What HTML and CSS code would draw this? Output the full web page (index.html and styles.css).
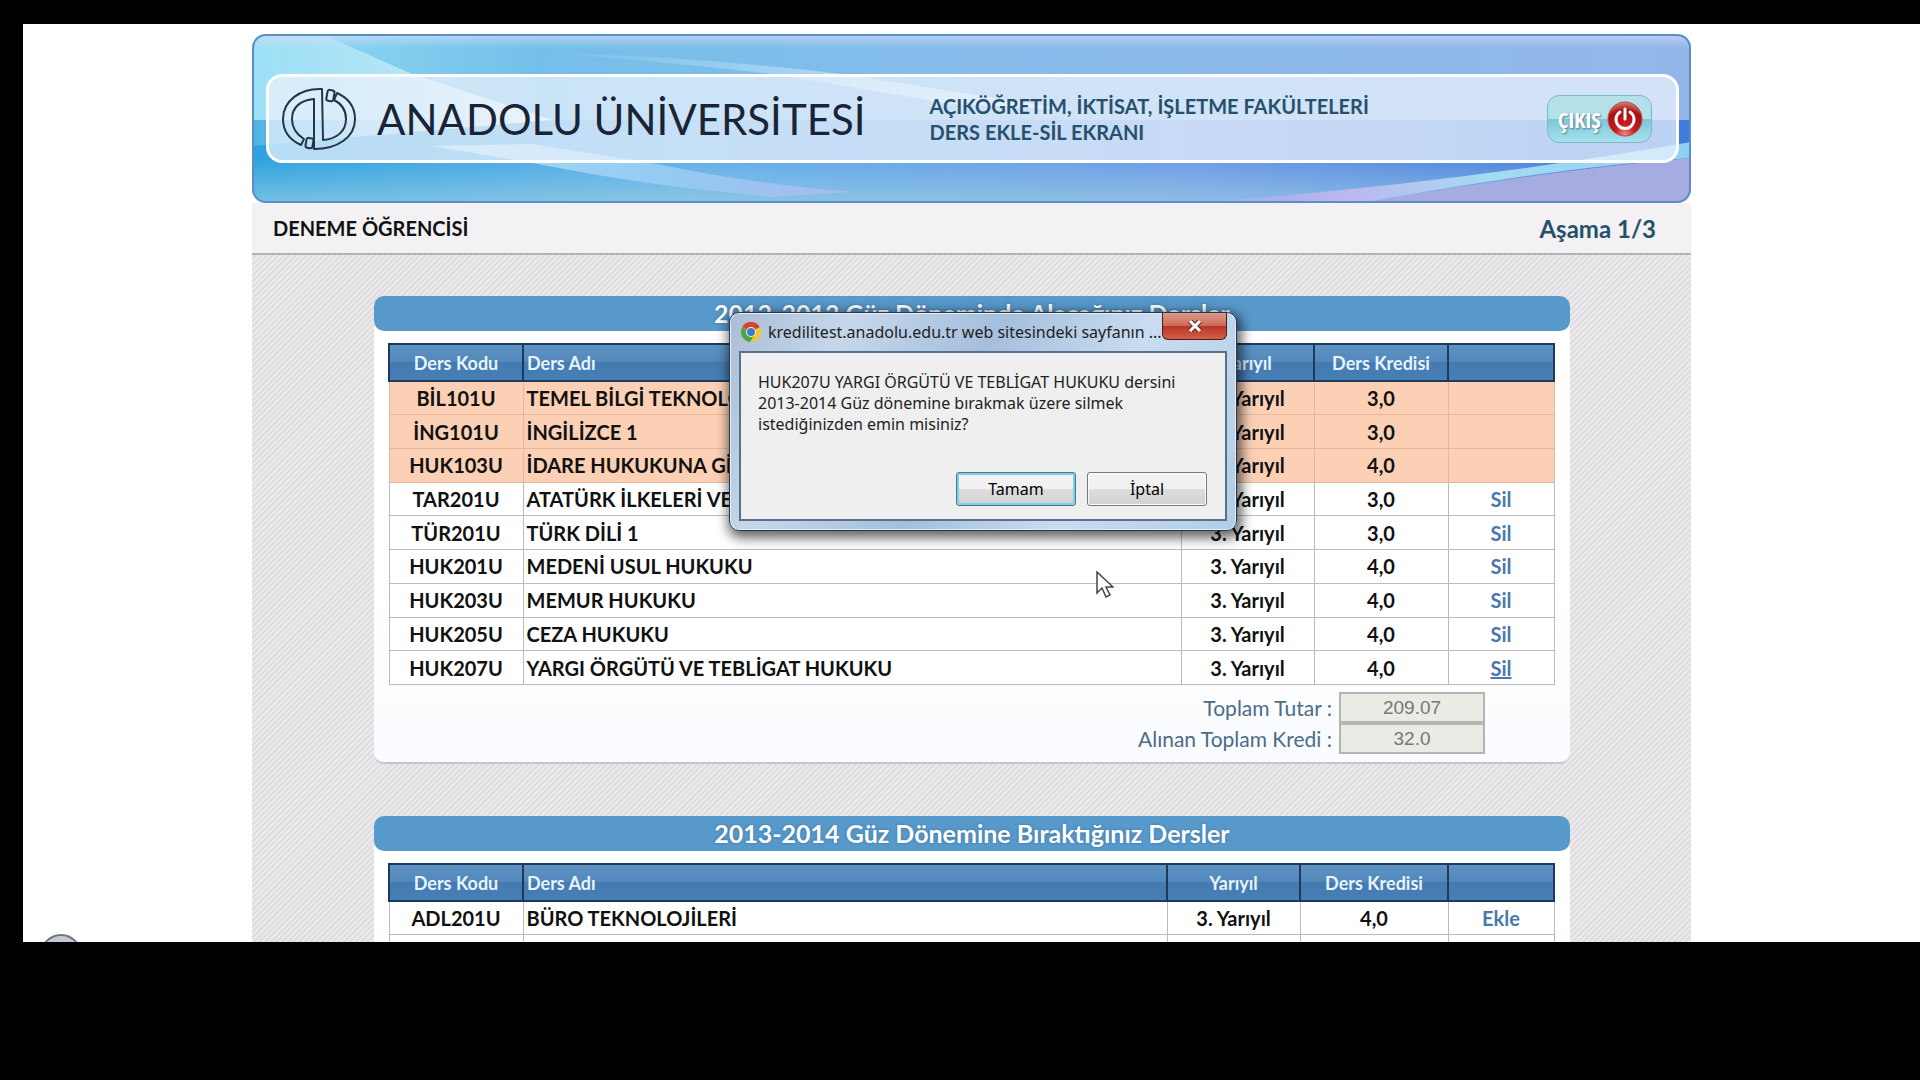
FILE: index.html
```html
<!DOCTYPE html>
<html lang="tr">
<head>
  <meta charset="UTF-8">
  <meta name="viewport" content="width=device-width, initial-scale=1.0">
  <title>Anadolu Üniversitesi - Ders Ekle-Sil Ekranı</title>
  <link rel="stylesheet" href="styles.css">
</head>
<body>
  <div class="screen">
    <div class="page">
      <header class="banner">
        <svg class="banner-bg" viewBox="0 0 1439 169" preserveAspectRatio="none" aria-hidden="true">
          <defs>
            <linearGradient id="top" x1="0" x2="1" y1="0" y2="0">
              <stop offset="0" stop-color="#8fdcf4"/>
              <stop offset=".2" stop-color="#74bfe9"/>
              <stop offset=".5" stop-color="#86bbea"/>
              <stop offset="1" stop-color="#93b6e8"/>
            </linearGradient>
            <linearGradient id="low" x1="0" x2="1" y1="0" y2="0">
              <stop offset="0" stop-color="#2da3df"/>
              <stop offset=".3" stop-color="#62b0e8"/>
              <stop offset=".65" stop-color="#6f9ce6"/>
              <stop offset="1" stop-color="#3f7bdc"/>
            </linearGradient>
            <linearGradient id="gloss" x1="0" x2="0" y1="0" y2="1">
              <stop offset="0" stop-color="#d4dcf8" stop-opacity=".7"/>
              <stop offset="1" stop-color="#d4dcf8" stop-opacity="0"/>
            </linearGradient>
            <linearGradient id="foot" x1="0" x2="0" y1="0" y2="1">
              <stop offset="0" stop-color="#a6d4e4" stop-opacity="0"/>
              <stop offset="1" stop-color="#a6d4e4" stop-opacity=".6"/>
            </linearGradient>
            <linearGradient id="ray" x1="0" x2="1" y1="0" y2="0">
              <stop offset="0" stop-color="#d2f3fb" stop-opacity=".2"/>
              <stop offset="1" stop-color="#e4f7fd"/>
            </linearGradient>
            <linearGradient id="beam" x1="0" x2="1" y1="0" y2="0">
              <stop offset="0" stop-color="#b9a9ee" stop-opacity=".2"/>
              <stop offset=".3" stop-color="#bcb6f0"/>
              <stop offset=".6" stop-color="#a4dcf0"/>
              <stop offset="1" stop-color="#8fd0f2"/>
            </linearGradient>
            <linearGradient id="swoosh" x1="0" x2="1" y1="0" y2="0">
              <stop offset="0" stop-color="#c5e8fa" stop-opacity="0"/>
              <stop offset="1" stop-color="#d5effc"/>
            </linearGradient>
            <linearGradient id="tail" x1="0" x2="1" y1="0" y2="0">
              <stop offset="0" stop-color="#a5dcf4"/>
              <stop offset=".6" stop-color="#93c9f2"/>
              <stop offset="1" stop-color="#a9b9f2"/>
            </linearGradient>
          </defs>
          <rect width="1439" height="169" fill="url(#low)"/>
          <rect width="1439" height="86" fill="url(#top)"/>
          <rect y="125" width="1439" height="44" fill="url(#foot)"/>
          <path d="M0 0H70L160 40 300 86 0 112Z" fill="url(#ray)"/>
          <path d="M280 18Q440 22 590 40L820 76 700 70 520 40Q400 26 280 18Z" fill="url(#swoosh)"/>
          <path d="M180 112 280 129Q400 153 520 163L600 158Q500 150 400 129L280 110Z" fill="url(#tail)"/>
          <path d="M940 169Q1200 150 1439 108V124Q1300 134 1110 169Z" fill="url(#beam)"/>
          <path d="M1110 169Q1290 137 1439 124V169Z" fill="#a6abe2"/>
          <rect width="1439" height="14" fill="url(#gloss)"/>
        </svg>
        <div class="banner-inner">
          <svg class="logo" viewBox="0 0 76 64" aria-hidden="true">
            <g fill="none" stroke="#243548" stroke-width="2" stroke-linejoin="round">
              <path d="M41 2C19 1 2 14 2 32C2 44 9 53 20 58L23 52C15 47 11 40 11 32C11 20 20 13 33 12V62C57 62 74 50 74 32C74 20 67 11 56 6L53 13C61 17 65 24 65 32C65 44 56 52 42 53Z"/>
              <rect x="46" y="3" width="7" height="11" rx="2" transform="rotate(10 49 8)"/>
              <rect x="25" y="51" width="7" height="10" rx="2" transform="rotate(10 28 56)"/>
            </g>
          </svg>
          <div class="brand">ANADOLU ÜNİVERSİTESİ</div>
          <h1 class="subtitle">AÇIKÖĞRETİM, İKTİSAT, İŞLETME FAKÜLTELERİ<br>DERS EKLE-SİL EKRANI</h1>
          <button class="exit" type="button">
            <span>ÇIKIŞ</span>
            <svg viewBox="0 0 36 36" width="36" height="36" aria-hidden="true">
              <defs>
                <radialGradient id="power" cx=".5" cy=".95" r="1">
                  <stop offset="0" stop-color="#f08a80"/>
                  <stop offset=".3" stop-color="#c81c1c"/>
                  <stop offset=".7" stop-color="#a80f12"/>
                  <stop offset="1" stop-color="#e89a92"/>
                </radialGradient>
              </defs>
              <circle cx="18" cy="18" r="17" fill="url(#power)" stroke="#b84a4c"/>
              <path d="M13 11A9 9 0 1 0 23 11M18 8V18" fill="none" stroke="#fff" stroke-width="3" stroke-linecap="round"/>
            </svg>
          </button>
        </div>
      </header>

      <div class="infobar">
        <span class="student">DENEME ÖĞRENCİSİ</span>
        <span class="step">Aşama 1/3</span>
      </div>

      <main class="content">
        <section class="panel">
          <h2>2012-2013 Güz Döneminde Alacağınız Dersler</h2>
          <table class="courses taken">
            <colgroup><col class="c-code"><col><col class="c-term"><col class="c-credit"><col class="c-action"></colgroup>
            <thead>
              <tr><th>Ders Kodu</th><th class="name">Ders Adı</th><th>Yarıyıl</th><th>Ders Kredisi</th><th></th></tr>
            </thead>
            <tbody>
              <tr class="locked"><td>BİL101U</td><td class="name">TEMEL BİLGİ TEKNOLOJİLERİ 1</td><td>1. Yarıyıl</td><td>3,0</td><td></td></tr>
              <tr class="locked"><td>İNG101U</td><td class="name">İNGİLİZCE 1</td><td>1. Yarıyıl</td><td>3,0</td><td></td></tr>
              <tr class="locked"><td>HUK103U</td><td class="name">İDARE HUKUKUNA GİRİŞ</td><td>1. Yarıyıl</td><td>4,0</td><td></td></tr>
              <tr><td>TAR201U</td><td class="name">ATATÜRK İLKELERİ VE İNKILAP TARİHİ 1</td><td>3. Yarıyıl</td><td>3,0</td><td><a href="#">Sil</a></td></tr>
              <tr><td>TÜR201U</td><td class="name">TÜRK DİLİ 1</td><td>3. Yarıyıl</td><td>3,0</td><td><a href="#">Sil</a></td></tr>
              <tr><td>HUK201U</td><td class="name">MEDENİ USUL HUKUKU</td><td>3. Yarıyıl</td><td>4,0</td><td><a href="#">Sil</a></td></tr>
              <tr><td>HUK203U</td><td class="name">MEMUR HUKUKU</td><td>3. Yarıyıl</td><td>4,0</td><td><a href="#">Sil</a></td></tr>
              <tr><td>HUK205U</td><td class="name">CEZA HUKUKU</td><td>3. Yarıyıl</td><td>4,0</td><td><a href="#">Sil</a></td></tr>
              <tr><td>HUK207U</td><td class="name">YARGI ÖRGÜTÜ VE TEBLİGAT HUKUKU</td><td>3. Yarıyıl</td><td>4,0</td><td><a class="active" href="#">Sil</a></td></tr>
            </tbody>
          </table>
          <div class="totals">
            <label for="amount">Toplam Tutar :</label>
            <input id="amount" type="text" value="209.07" readonly>
            <label for="credits">Alınan Toplam Kredi :</label>
            <input id="credits" type="text" value="32.0" readonly>
          </div>
        </section>

        <section class="panel">
          <h2>2013-2014 Güz Dönemine Bıraktığınız Dersler</h2>
          <table class="courses dropped">
            <colgroup><col class="c-code"><col><col class="c-term"><col class="c-credit"><col class="c-action"></colgroup>
            <thead>
              <tr><th>Ders Kodu</th><th class="name">Ders Adı</th><th>Yarıyıl</th><th>Ders Kredisi</th><th></th></tr>
            </thead>
            <tbody>
              <tr><td>ADL201U</td><td class="name">BÜRO TEKNOLOJİLERİ</td><td>3. Yarıyıl</td><td>4,0</td><td><a href="#">Ekle</a></td></tr>
              <tr><td></td><td></td><td></td><td></td><td></td></tr>
            </tbody>
          </table>
        </section>
      </main>

      <div class="dialog" role="dialog" aria-labelledby="dialogTitle">
        <div class="dialog-bar">
          <svg viewBox="0 0 20 20" width="20" height="20" aria-hidden="true">
            <circle cx="10" cy="10" r="10" fill="#f2c928"/>
            <path d="M10 10 1.3 5A10 10 0 0 1 18.7 5Z" fill="#d8402f"/>
            <path d="M10 10 1.3 5A10 10 0 0 0 9 20L14 12Z" fill="#4da64a"/>
            <circle cx="10" cy="10" r="5" fill="#f3f6fa"/>
            <circle cx="10" cy="10" r="4" fill="#3d7cc4"/>
          </svg>
          <span id="dialogTitle">kredilitest.anadolu.edu.tr web sitesindeki sayfanın ...</span>
          <button class="close" type="button" aria-label="Kapat">
            <svg viewBox="0 0 14 12" width="14" height="12"><path d="M2 1 12 11M12 1 2 11" stroke="#5d2a2a" stroke-width="5"/><path d="M2 1 12 11M12 1 2 11" stroke="#fff" stroke-width="3"/></svg>
          </button>
        </div>
        <div class="dialog-body">
          <p>HUK207U YARGI ÖRGÜTÜ VE TEBLİGAT HUKUKU dersini<br>2013-2014 Güz dönemine bırakmak üzere silmek<br>istediğinizden emin misiniz?</p>
          <div class="dialog-buttons">
            <button class="default" type="button">Tamam</button>
            <button type="button">İptal</button>
          </div>
        </div>
      </div>

      <svg class="cursor" viewBox="0 0 18 28" width="18" height="28" aria-hidden="true">
        <path d="M1 1V22L6 17 10 26 14 24 10 16H17Z" fill="#fff" stroke="#444" stroke-width="1.5"/>
      </svg>
    </div>
    <div class="orb"></div>
  </div>
</body>
</html>
```
FILE: styles.css
```css
* {
  box-sizing: border-box;
}
body {
  margin: 0;
  padding: 24px 0 0 23px;
  min-height: 100vh;
  background: #000;
  font-family: Lato, "Open Sans", sans-serif;
  color: #111;
}
.screen {
  position: relative;
  height: 85vh;
  overflow: hidden;
  background: #fff;
}
.page {
  position: relative;
  max-width: 1439px;
  margin: 0 auto;
  padding-top: 10px;
}

/* banner */
.banner {
  position: relative;
  padding: 40px 12px 40px 14px;
  border-radius: 14px;
  overflow: hidden;
}
.banner-bg {
  position: absolute;
  inset: 0;
  width: 100%;
  height: 100%;
}
.banner::after {
  content: "";
  position: absolute;
  inset: 0;
  border: 2px solid #5a8fc4;
  border-radius: 14px;
  pointer-events: none;
}
.banner-inner {
  position: relative;
  display: flex;
  align-items: center;
  height: 89px;
  padding: 0 24px 0 12px;
  border: 3px solid #fff;
  border-radius: 16px;
  background: rgba(235, 242, 252, 0.72);
}
.logo {
  width: 76px;
  height: 64px;
}
.brand {
  margin-left: 20px;
  font-size: 42px;
  color: #1a2436;
  white-space: nowrap;
}
.subtitle {
  margin: 0 0 0 64px;
  font-size: 20px;
  line-height: 26px;
  color: #27506f;
  white-space: nowrap;
}
.exit {
  display: flex;
  align-items: center;
  gap: 6px;
  height: 48px;
  margin-left: auto;
  padding: 0 8px 0 10px;
  border: 1px solid #7fb6cc;
  border-radius: 12px;
  background: linear-gradient(#b4e0ea 50%, #7cc6d8 50%, #a6e2ec);
  color: #fff;
  font: bold 22px "Open Sans", sans-serif;
  font-stretch: condensed;
  text-shadow: 1px 1px 2px #4b7a8a;
}

/* student line */
.infobar {
  display: flex;
  align-items: center;
  justify-content: space-between;
  height: 52px;
  padding: 0 35px 0 21px;
  background: #f3f1f3;
  border-bottom: 2px solid #b5b3b5;
  font-weight: bold;
}
.student {
  font-size: 20px;
}
.step {
  font-size: 24px;
  color: #24506c;
}

/* panels */
.content {
  padding: 41px 121px 0 122px;
  min-height: 100vh;
  background: repeating-linear-gradient(135deg, #ebe9eb 0 2px, #dfdddf 2px 4px);
}
.panel {
  margin-bottom: 52px;
  padding-bottom: 8px;
  background: linear-gradient(#fff 60%, #fafbfe);
  border-bottom: 2px solid #c3c6cc;
  border-radius: 10px;
}
.panel h2 {
  height: 35px;
  margin: 0 0 12px;
  border-radius: 10px;
  background: #5899cb;
  color: #fff;
  font-size: 25px;
  line-height: 34px;
  text-align: center;
  text-shadow: 0 0 3px #3b6f9c;
}
.courses {
  width: calc(100% - 29px);
  margin: 0 15px 0 14px;
  border-collapse: collapse;
  table-layout: fixed;
  font-size: 20px;
  font-weight: bold;
}
.taken {
  height: 342px;
}
.c-code {
  width: 134px;
}
.c-term {
  width: 133px;
}
.c-credit {
  width: 134px;
}
.c-action {
  width: 106px;
}
.dropped .c-credit {
  width: 148px;
}
th,
td {
  padding: 0;
  text-align: center;
  white-space: nowrap;
}
th {
  height: 37px;
  border: 2px solid #1d3a5c;
  background: linear-gradient(#5e93c4, #5287b9 50%, #447ab0 50%, #477fb6);
  color: #e6f4ff;
  font-size: 18px;
}
td {
  height: 33px;
  border: 1px solid #b9bbbf;
  background: #fff;
}
.locked td {
  border-color: #e0b8a2;
  background: #fbd0b5;
}
.name {
  padding-left: 3px;
  text-align: left;
}
.courses a {
  color: #4a78ae;
  text-decoration: none;
}
.courses a.active {
  text-decoration: underline;
}
.totals {
  display: grid;
  grid-template-columns: 1fr 146px;
  column-gap: 7px;
  align-items: center;
  padding: 7px 85px 0 0;
  color: #4c6c88;
  font-size: 21px;
  line-height: 31px;
  text-align: right;
}
.totals input {
  width: 100%;
  height: 31px;
  padding: 0;
  border: 2px solid #b4b5b1;
  background: #ebebe6;
  color: #777;
  font: 19px "Liberation Sans", sans-serif;
  text-align: center;
}

/* confirm window */
.dialog {
  position: absolute;
  top: 288px;
  left: 477px;
  width: 508px;
  padding: 0 9px 9px;
  border: 1px solid #26384c;
  border-radius: 10px;
  background: linear-gradient(115deg, #a9bdd6, #c6d7ea 20%, #a4bfdc 45%, #c9dcf0 70%, #b3cde8);
  box-shadow: inset 0 0 0 1px #e3eefa, 2px 4px 12px 3px rgba(0, 0, 0, 0.6);
  font-family: "Noto Sans", sans-serif;
  font-size: 16px;
  color: #222;
}
.dialog-bar {
  display: flex;
  align-items: center;
  height: 38px;
  padding-left: 2px;
}
#dialogTitle {
  flex: 1;
  margin-left: 7px;
  white-space: nowrap;
}
.close {
  display: flex;
  align-items: center;
  justify-content: center;
  align-self: flex-start;
  width: 65px;
  height: 27px;
  padding: 0;
  border: 1px solid #4d1c1c;
  border-top: none;
  border-radius: 0 0 6px 6px;
  background: linear-gradient(#dc9a8d, #cf6a59 48%, #b93322 50%, #d2604a);
}
.dialog-body {
  height: 170px;
  padding: 19px 18px 13px 17px;
  border: 2px solid #57718c;
  background: #efeff0;
}
.dialog-body p {
  margin: 0;
  line-height: 21px;
  white-space: nowrap;
}
.dialog-buttons {
  display: flex;
  justify-content: flex-end;
  gap: 11px;
  margin-top: 37px;
}
.dialog-buttons button {
  width: 120px;
  height: 34px;
  padding: 0;
  border: 1px solid #77787a;
  border-radius: 3px;
  background: linear-gradient(#f2f1f2 50%, #dfdcdf 50%, #d3d1d4);
  box-shadow: inset 0 0 0 1px #fbfbfb;
  font: inherit;
}
.dialog-buttons .default {
  border-color: #3c7f94;
  box-shadow: inset 0 0 0 2px #7fcfdf;
}

.cursor {
  position: absolute;
  top: 547px;
  left: 844px;
}
.orb {
  position: absolute;
  bottom: -34px;
  left: 17px;
  width: 42px;
  height: 42px;
  border: 2px solid #6f747c;
  border-radius: 50%;
  background: #c5cad2;
}
```
